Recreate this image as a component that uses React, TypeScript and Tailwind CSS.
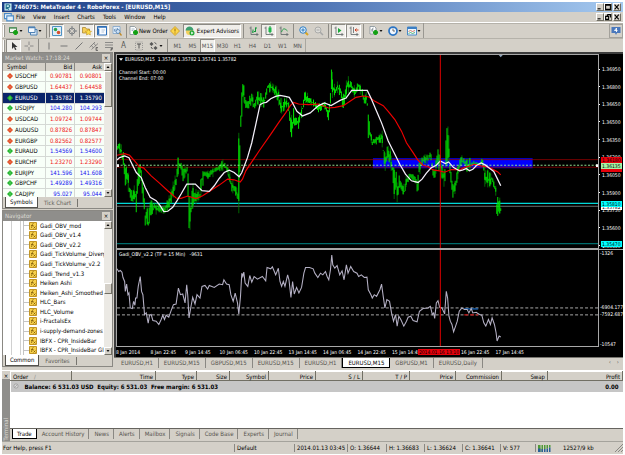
import type { ReactNode } from "react";
import clsx from "clsx";

type Point = [number, number];
type Range = [number, number, number];

const quotes = [
  { symbol: "USDCHF", bid: "0.90781", ask: "0.90801", up: false },
  { symbol: "GBPUSD", bid: "1.64437", ask: "1.64458", up: false },
  { symbol: "EURUSD", bid: "1.35782", ask: "1.35790", up: true, selected: true },
  { symbol: "USDJPY", bid: "104.280", ask: "104.293", up: true },
  { symbol: "USDCAD", bid: "1.09724", ask: "1.09744", up: false },
  { symbol: "AUDUSD", bid: "0.87826", ask: "0.87847", up: false },
  { symbol: "EURGBP", bid: "0.82562", ask: "0.82577", up: false },
  { symbol: "EURAUD", bid: "1.54569", ask: "1.54600", up: true },
  { symbol: "EURCHF", bid: "1.23270", ask: "1.23290", up: false },
  { symbol: "EURJPY", bid: "141.596", ask: "141.608", up: true },
  { symbol: "GBPCHF", bid: "1.49289", ask: "1.49316", up: true },
  { symbol: "CADJPY", bid: "95.027", ask: "95.044", up: true },
];

const indicators = [
  "Gadi_OBV_mod",
  "Gadi_OBV_v1.4",
  "Gadi_OBV_v2.2",
  "Gadi_TickVolume_Diverg",
  "Gadi_TickVolume_v2.2",
  "Gadi_Trend_v1.3",
  "Heiken Ashi",
  "Heiken_Ashi_Smoothed",
  "HLC_Bars",
  "HLC_Volume",
  "i-FractalsEx",
  "i-supply-demand-zones",
  "IBFX - CPR_InsideBar",
  "IBFX - CPR_InsideBar Gl",
];

const menus = ["File", "View", "Insert", "Charts", "Tools", "Window", "Help"];
const periods = ["M1", "M5", "M15", "M30", "H1", "H4", "D1", "W1", "MN"];

const chartTabs = [
  "EURUSD,H1",
  "EURUSD,M15",
  "GBPUSD,M15",
  "EURUSD,M15",
  "EURUSD,H1",
  "EURUSD,M15",
  "GBPUSD,M1",
  "EURUSD,Daily",
];

const priceTicks = [
  "1.36950", "1.36800", "1.36650", "1.36500", "1.36350", "1.36200",
  "1.36050", "1.35900", "1.35750", "1.35600", "1.35450",
];

const dates = [
  "8 Jan 2014", "8 Jan 22:45", "9 Jan 14:45", "10 Jan 06:45", "10 Jan 22:45",
  "13 Jan 14:45", "14 Jan 06:45", "14 Jan 22:45", "15 Jan 14:45", "",
  "16 Jan 22:45", "17 Jan 14:45", "", "",
];

const orderColumns = [
  { label: "Time", width: "w-[84px]" },
  { label: "Type", width: "w-[41px]" },
  { label: "Size", width: "w-[33px]" },
  { label: "Symbol", width: "w-[39px]" },
  { label: "Price", width: "w-[47px]" },
  { label: "S / L", width: "w-[47px]" },
  { label: "T / P", width: "w-[47px]" },
  { label: "Price", width: "w-[46px]" },
  { label: "Commission", width: "w-[46px]" },
  { label: "Swap", width: "w-[46px]" },
  { label: "Profit", width: "" },
];

const terminalTabs = [
  "Trade", "Account History", "News", "Alerts", "Mailbox",
  "Signals", "Code Base", "Experts", "Journal",
];

// x, high, low of the price bars, one block per part of the session
const barsA: Range[] = [
  [0, 275, 305], [13, 285, 320], [20, 300, 370], [25, 345, 420], [30, 350, 395], [38, 390, 460],
  [46, 435, 465], [54, 400, 450], [57, 420, 515], [60, 400, 450], [64, 350, 430], [70, 335, 390],
  [76, 390, 440], [81, 430, 500], [85, 490, 545], [90, 470, 515], [94, 490, 565], [101, 445, 510],
  [108, 460, 490], [123, 465, 500], [138, 475, 495], [153, 450, 490], [160, 430, 470], [168, 400, 450],
  [178, 370, 410], [185, 318, 375], [193, 340, 370], [200, 345, 410], [207, 345, 375], [211, 350, 380],
  [213, 278, 430], [216, 430, 580], [223, 455, 515], [228, 400, 480], [238, 420, 465], [250, 425, 450],
  [256, 355, 430], [263, 360, 385], [273, 365, 390], [288, 355, 385], [303, 350, 370], [321, 328, 365],
  [333, 350, 375], [340, 370, 400], [346, 390, 435], [353, 400, 430], [360, 415, 445], [365, 420, 460],
  [368, 165, 510], [372, 175, 330], [375, 110, 240], [379, 88, 150], [386, 130, 170], [392, 155, 195],
  [400, 135, 180], [408, 130, 170], [413, 155, 185], [424, 125, 165], [433, 125, 170], [443, 145, 175],
  [453, 95, 135], [463, 95, 125], [473, 105, 130], [485, 110, 160], [493, 145, 190], [503, 145, 195],
];
const barsB: Range[] = [
  [0, 140, 170], [8, 145, 180], [15, 180, 260], [20, 200, 265], [26, 170, 215], [30, 195, 245],
  [38, 200, 245], [45, 180, 220], [52, 160, 195], [58, 125, 160], [65, 125, 160], [75, 145, 165],
  [90, 150, 175], [97, 165, 195], [105, 155, 185], [115, 160, 180], [122, 155, 180], [130, 180, 220],
  [135, 140, 200], [139, 42, 140], [145, 90, 150], [150, 110, 135], [157, 95, 130], [165, 100, 150],
  [173, 130, 190], [180, 115, 170], [187, 75, 130], [195, 85, 130], [205, 110, 140], [213, 100, 150],
  [220, 95, 125], [230, 110, 140], [238, 140, 165], [246, 120, 160], [249, 150, 270], [255, 240, 270],
  [262, 265, 290], [275, 260, 285], [285, 255, 280], [291, 235, 280], [296, 280, 350], [301, 310, 365],
  [307, 290, 330], [315, 290, 345], [322, 340, 380], [328, 355, 450], [333, 350, 420], [337, 400, 460],
  [343, 370, 420], [350, 395, 430], [358, 410, 440], [365, 375, 410], [375, 370, 390], [385, 372, 395],
  [393, 385, 410], [398, 395, 450], [402, 330, 400], [410, 325, 350], [420, 315, 345], [430, 315, 345],
  [437, 298, 330], [443, 340, 375], [450, 370, 405], [457, 295, 350], [465, 300, 370], [472, 350, 390],
  [480, 360, 420], [485, 220, 370], [492, 235, 330], [497, 350, 390], [505, 400, 455],
];
const barsC: Range[] = [
  [0, 400, 440], [8, 360, 400], [14, 320, 370], [20, 315, 345], [30, 330, 355], [35, 330, 370],
  [45, 325, 365], [55, 335, 355], [65, 335, 350], [75, 340, 355], [85, 322, 350], [90, 350, 415],
  [96, 370, 400], [100, 360, 415], [106, 370, 415], [112, 375, 400], [120, 400, 420], [124, 410, 440],
  [127, 430, 520], [133, 450, 510], [137, 445, 490], [139, 470, 490],
];

const fastAverage: Point[] = [
  [0, 332], [8, 325], [23, 320], [36, 325], [48, 350], [58, 370], [73, 385], [85, 415], [100, 445],
  [118, 455], [130, 470], [141, 488], [153, 487], [168, 475], [181, 455], [193, 435], [210, 405],
  [236, 405], [256, 425], [278, 427], [293, 410], [308, 388], [323, 370], [338, 363], [353, 370],
  [368, 383], [376, 370], [393, 325], [406, 280], [418, 225], [431, 165], [440, 160], [450, 158],
  [463, 147], [478, 140], [491, 137], [507, 140], [519, 143], [529, 160], [542, 185], [559, 199],
  [582, 190], [607, 168], [625, 160], [645, 168], [672, 152], [690, 145], [707, 122], [754, 122],
  [765, 145], [782, 185], [797, 220], [817, 275], [837, 315], [852, 345], [869, 375], [887, 395],
  [907, 400], [919, 390], [932, 372], [947, 355], [962, 348], [974, 335], [989, 343], [999, 338],
  [1014, 355], [1032, 365], [1042, 362], [1052, 358], [1062, 365], [1072, 360], [1085, 347],
  [1097, 341], [1109, 347], [1122, 357], [1135, 367], [1145, 387], [1156, 410],
];
const slowAverage: Point[] = [
  [0, 318], [23, 313], [38, 318], [53, 335], [68, 353], [80, 356], [103, 380], [128, 402], [153, 425],
  [178, 447], [193, 448], [213, 441], [238, 449], [258, 440], [278, 427], [308, 408], [333, 390],
  [353, 392], [371, 399], [378, 390], [388, 365], [408, 335], [428, 305], [463, 255], [488, 218],
  [508, 190], [522, 168], [532, 158], [547, 163], [577, 165], [607, 163], [637, 175], [657, 173],
  [682, 168], [702, 155], [720, 143], [742, 139], [759, 142], [777, 155], [802, 168], [817, 185],
  [837, 210], [857, 245], [872, 280], [892, 310], [907, 333], [922, 348], [937, 352], [952, 362],
  [972, 365], [987, 369], [1007, 361], [1032, 362], [1047, 355], [1077, 345], [1097, 350],
  [1117, 353], [1135, 362], [1147, 368], [1156, 377],
];

const volumeLine: Point[] = [
  [0, 72], [5, 80], [10, 77], [15, 82], [18, 98], [23, 110], [25, 140], [29, 118], [33, 150], [36, 145],
  [40, 190], [46, 192], [50, 170], [54, 182], [56, 160], [60, 160], [64, 125], [70, 95], [74, 140],
  [78, 150], [83, 210], [88, 205], [94, 236], [98, 212], [103, 210], [108, 228], [118, 230], [126, 240],
  [133, 225], [138, 212], [143, 225], [148, 212], [156, 218], [163, 198], [170, 180], [178, 178],
  [185, 130], [191, 150], [198, 148], [205, 175], [210, 120], [213, 150], [217, 220], [223, 185],
  [228, 158], [235, 178], [241, 150], [250, 160], [256, 125], [265, 122], [273, 133], [278, 122],
  [293, 128], [308, 118], [318, 120], [322, 105], [330, 118], [338, 120], [343, 150], [350, 170],
  [356, 145], [363, 175], [367, 208], [372, 155], [376, 85], [379, 95], [382, 82], [386, 115],
  [394, 125], [400, 92], [406, 112], [413, 95], [423, 103], [438, 95], [448, 108], [452, 68], [463, 72],
  [468, 66], [478, 90], [486, 70], [491, 110], [496, 125], [501, 110], [506, 125], [514, 90], [518, 105],
  [524, 158], [529, 110], [534, 148], [541, 128], [548, 145], [556, 128], [563, 85], [568, 68],
  [580, 68], [591, 72], [596, 85], [605, 98], [613, 85], [620, 90], [628, 80], [633, 95], [638, 105],
  [643, 75], [647, 30], [650, 60], [656, 70], [663, 62], [671, 90], [678, 78], [684, 105], [691, 60],
  [696, 85], [704, 65], [713, 80], [723, 85], [728, 95], [736, 90], [745, 98], [753, 97], [757, 135],
  [765, 150], [769, 160], [775, 150], [782, 155], [792, 135], [797, 118], [802, 155], [807, 190],
  [813, 165], [821, 170], [827, 205], [833, 230], [839, 210], [844, 245], [849, 215], [855, 225],
  [864, 245], [872, 230], [877, 218], [885, 215], [892, 228], [904, 232], [911, 200], [922, 192],
  [937, 190], [944, 185], [950, 210], [954, 205], [957, 222], [962, 175], [967, 168], [972, 188],
  [979, 190], [987, 208], [992, 140], [996, 160], [1000, 215], [1004, 230], [1009, 240], [1014, 262],
  [1020, 245], [1025, 230], [1031, 200], [1039, 190], [1047, 195], [1055, 195], [1060, 205],
  [1067, 192], [1072, 205], [1082, 203], [1092, 210], [1099, 212], [1105, 235], [1111, 245],
  [1119, 225], [1125, 240], [1130, 220], [1137, 240], [1142, 265], [1145, 290], [1151, 275], [1156, 278],
];

const shift = (by: number, bars: Range[]): Range[] =>
  bars.map(([x, high, low]) => [x + by, high, low]);

const bars = [...barsA, ...shift(507, barsB), ...shift(1017, barsC)];

const noise = (n: number) => {
  const v = Math.sin(n * 12.9898) * 43758.5453;
  return v - Math.floor(v);
};

const buildBars = () => {
  let bright = "";
  let dark = "";
  let k = 0;
  for (let x = 1; x <= 1157; x += 3) {
    while (k < bars.length - 2 && bars[k + 1][0] <= x) k++;
    const [x0, h0, l0] = bars[k];
    const [x1, h1, l1] = bars[k + 1];
    const t = Math.min(1, Math.max(0, (x - x0) / (x1 - x0)));
    const high = h0 + (h1 - h0) * t;
    const low = l0 + (l1 - l0) * t;
    const range = low - high;
    const a = high + range * noise(x) * 0.5;
    const b = low - range * noise(x + 7) * 0.5;
    bright += `M${x} ${a.toFixed(0)}V${b.toFixed(0)}`;
    if (noise(x + 3) > 0.7) dark += `M${x} ${high.toFixed(0)}V${low.toFixed(0)}`;
  }
  return { bright, dark };
};

const priceBars = buildBars();
const line = (points: Point[]) => points.map((p) => p.join(",")).join(" ");

const Icon = ({ children, className }: { children: ReactNode; className?: string }) => (
  <svg viewBox="0 0 20 20" className={clsx("size-2.5 shrink-0", className)} fill="none" aria-hidden="true">
    {children}
  </svg>
);

const plus = <path d="M13 8v10M8 13h10" stroke="#12a012" strokeWidth="5" />;
const axes = <path d="M4 1v16h15M1 4h3M16 14v6" stroke="#5d6468" strokeWidth="1.6" />;

const icons = {
  newChart: (
    <Icon>
      <path d="M1 3h14v10H1z" fill="#eef6ee" stroke="#4a8050" strokeWidth="2" />
      <path d="M1 4h14" stroke="#5c9a66" strokeWidth="3" />
      {plus}
    </Icon>
  ),
  profiles: (
    <Icon>
      <path d="M5 7h13v11H5z" fill="#dbe9f7" stroke="#4f82b5" strokeWidth="2" />
      <path d="M1 2h13v11H1z" fill="#f4f9ff" stroke="#4f82b5" strokeWidth="2" />
      <path d="M1 3h13" stroke="#4f82b5" strokeWidth="3" />
    </Icon>
  ),
  watch: (
    <Icon>
      <path d="M1 1h18v18H1z" fill="#dceefa" stroke="#4f93c4" strokeWidth="2" />
      <circle cx="7" cy="7" r="3.5" fill="#2ca44a" />
      <circle cx="13" cy="13" r="3.5" fill="#d8502c" />
    </Icon>
  ),
  target: (
    <Icon>
      <circle cx="10" cy="10" r="6" stroke="#7b7f82" strokeWidth="2" />
      <path d="M10 0v8M10 12v8M0 10h8M12 10h8" stroke="#7b7f82" strokeWidth="2" />
    </Icon>
  ),
  favorites: (
    <Icon>
      <path d="M1 3h6l2 3h6v8H1z" fill="#f6cf5a" stroke="#a9832a" strokeWidth="1.5" />
      <path d="m13 6 2 4 4 .6-3 3 .8 4.4-3.8-2-4 2 .8-4.4-3-3 4.2-.6z" fill="#ffdf4a" stroke="#b8860b" />
    </Icon>
  ),
  data: (
    <Icon>
      <path d="M1 1h18v17H1z" fill="#f8fbff" stroke="#2e6fb8" strokeWidth="2" />
      <path d="M1 2h18M3 5v12" stroke="#2e6fb8" strokeWidth="3" />
      <path d="M9 8h7M9 12h5" stroke="#a0b8d0" strokeWidth="1.5" />
    </Icon>
  ),
  tester: (
    <Icon>
      <path d="M2 1h14v14H2z" fill="#e4effa" stroke="#7aa0c8" strokeWidth="1.5" />
      <path d="M5 11V6M8 12V5M11 9V4" stroke="#5a86b0" strokeWidth="1.5" />
      <circle cx="12" cy="11" r="4" fill="#cfe2f5" stroke="#4a78a8" strokeWidth="1.5" />
      <path d="m15 14 4 5" stroke="#c08a28" strokeWidth="2.5" />
    </Icon>
  ),
  newOrder: (
    <Icon>
      <path d="M2 1h9l4 4v12H2z" fill="#fff" stroke="#7b8a92" strokeWidth="1.5" />
      <path d="M5 6h6M5 9h4" stroke="#8aa0b0" strokeWidth="1.5" />
      {plus}
    </Icon>
  ),
  alert: (
    <Icon>
      <path d="m10 1 9 9-9 9-9-9z" fill="#fcd64c" stroke="#c79413" strokeWidth="1.5" />
      <path d="M10 5v6M10 13v2" stroke="#9a6a08" strokeWidth="2" />
    </Icon>
  ),
  expert: (
    <Icon>
      <circle cx="9" cy="11" r="7" fill="#f2cf5d" />
      <path d="M1 9c1-6 4-8 8-8s7 2 8 8z" fill="#3ea070" />
      <circle cx="14" cy="14" r="5" fill="#22a836" />
      <path d="m12.5 11 4.5 3-4.5 3z" fill="#fff" />
    </Icon>
  ),
  bar: (
    <Icon>
      {axes}
      <path d="M8 7v7M8 12H6M13 3v9M13 4h3M13 11h-3" stroke="#13983a" strokeWidth="2" />
    </Icon>
  ),
  candle: (
    <Icon>
      {axes}
      <path d="M12 0v15" stroke="#13983a" strokeWidth="2" />
      <path d="M9 3h6v9H9z" fill="#1cb84a" />
    </Icon>
  ),
  lineChart: (
    <Icon>
      {axes}
      <path d="M5 12c3-8 6-8 12-2" stroke="#13983a" strokeWidth="1.8" />
    </Icon>
  ),
  zoomIn: (
    <Icon>
      <path d="m12 12 6 6" stroke="#d9a520" strokeWidth="4" />
      <circle cx="8" cy="8" r="6.5" fill="#dff0fc" stroke="#2f7cc0" strokeWidth="2" />
      <path d="M8 4.5v7M4.500 8h7" stroke="#2f7cc0" strokeWidth="2" />
    </Icon>
  ),
  zoomOut: (
    <Icon>
      <path d="m12 12 6 6" stroke="#a5a6a5" strokeWidth="3" />
      <circle cx="8" cy="8" r="6" fill="#dddcd8" stroke="#a5a6a5" strokeWidth="1.8" />
      <path d="M5 8h6" stroke="#a5a6a5" strokeWidth="2" />
    </Icon>
  ),
  scroll: (
    <Icon>
      {axes}
      <path d="m8 4 7 5-7 5z" fill="#18a838" />
    </Icon>
  ),
  shiftEnd: (
    <Icon>
      {axes}
      <path d="M9 2v12" stroke="#5d6468" strokeWidth="1.6" />
      <path d="M19 8h-7M15 5l-3 3 3 3" stroke="#d04020" strokeWidth="2" />
    </Icon>
  ),
  addIndicator: (
    <Icon>
      <path d="M2 1h9l3 3v12H2z" fill="#fff" stroke="#7b8a92" strokeWidth="1.5" />
      <path d="M9 4c-3 0-2 3-3 9M4 8h5" stroke="#6a7a80" strokeWidth="1.5" />
      {plus}
    </Icon>
  ),
  clock: (
    <Icon>
      <circle cx="10" cy="10" r="8" fill="#f2f8ff" stroke="#2c75c4" strokeWidth="3.5" />
      <path d="M10 5v5h4" stroke="#444" strokeWidth="1.5" />
    </Icon>
  ),
  template: (
    <Icon>
      <path d="M1 2h18v16H1z" fill="#eef7ff" stroke="#4a8ac8" strokeWidth="2" />
      <path d="M1 4h18" stroke="#3c7fc4" strokeWidth="4" />
      <path d="m3 11 4-2 4 2 5-2" stroke="#cf5a3a" strokeWidth="1.5" />
      <path d="m3 15 4-2 4 2 5-2" stroke="#2ba04a" strokeWidth="1.5" />
    </Icon>
  ),
  cursor: (
    <Icon>
      <path d="M6 2v14l4-4 2 6 3-1-3-5h5z" fill="#333" />
    </Icon>
  ),
  cross: (
    <Icon>
      <path d="M10 1v7M10 12v7M1 10h7M12 10h7" stroke="#7a7a78" strokeWidth="1.6" />
    </Icon>
  ),
  vertical: <Icon><path d="M10 3v14" stroke="#777" strokeWidth="2" /></Icon>,
  horizontal: <Icon><path d="M3 10h14" stroke="#777" strokeWidth="2" /></Icon>,
  trend: <Icon><path d="M3 17 17 3" stroke="#777" strokeWidth="2" /></Icon>,
  channel: (
    <Icon>
      <path d="M1 13 12 2M5 17 18 5M4 8l5 6M9 4l5 6" stroke="#777" strokeWidth="1.6" />
      <path d="M18 13h-4v6h4M14 16h3" stroke="#555" strokeWidth="1.5" />
    </Icon>
  ),
  fibonacci: (
    <Icon>
      <path d="M2 3h16M2 8h16M2 13h16" stroke="#777" strokeWidth="1.6" />
      <path d="M18 15h-4v5M14 17h3" stroke="#555" strokeWidth="1.5" />
    </Icon>
  ),
  label: (
    <Icon>
      <path d="M3 2h14v16H3z" stroke="#888" strokeWidth="1.5" strokeDasharray="2 2" />
      <path d="M6 6h8M10 6v9" stroke="#555" strokeWidth="2" />
    </Icon>
  ),
  arrows: (
    <Icon>
      <path d="m1 6 4-4 4 4-4 4zM9 14l4-4 4 4-4 4z" fill="#555" />
      <path d="m4 12 3 4M11 3l4 3" stroke="#555" strokeWidth="2" />
    </Icon>
  ),
};

const Caret = () => (
  <svg viewBox="0 0 6 4" className="h-0.5 w-1 shrink-0" aria-hidden="true">
    <path d="M0 0h6L3 4z" fill="#111" />
  </svg>
);

const pressedLook = "border border-[#8c8a84] border-r-white border-b-white bg-[#f0eeea]";
const raisedLook = "border border-white border-r-[#716f64] border-b-[#716f64] bg-[#d4d0c8]";

type ToolProps = { name: string; children: ReactNode; pressed?: boolean; menu?: boolean };

const Tool = ({ name, children, pressed, menu }: ToolProps) => (
  <button
    type="button"
    aria-label={name}
    className={clsx(
      "flex h-3.5 shrink-0 items-center justify-center",
      menu ? "w-[19px]" : "w-[15px]",
      pressed && pressedLook,
    )}
  >
    {children}
    {menu && <Caret />}
  </button>
);

const Divider = () => (
  <span className="mx-0.5 h-3.5 w-px shrink-0 bg-[#8f8d87]" />
);

const Grip = () => (
  <span className="mx-px h-3 w-0.5 shrink-0 border-x border-l-white border-r-[#9a9892]" />
);

const WindowButtons = ({ restore }: { restore?: boolean }) => (
  <div className="ml-auto flex items-center">
    {["Minimize", restore ? "Restore" : "Maximize", "Close"].map((name) => (
      <button
        key={name}
        type="button"
        aria-label={name}
        className={clsx("flex h-2 w-2 items-center justify-center last:ml-px", raisedLook)}
      >
        <svg viewBox="0 0 10 10" className="size-1.5 shrink-0" fill="none" stroke="#000" strokeWidth="1.8">
          {name === "Minimize" && <path d="M1 8h5" />}
          {name === "Maximize" && <path d="M1 1h8v8H1zM1 2h8" />}
          {name === "Restore" && <path d="M4 1h5v5M1 4h5v5H1zM4 1v3" />}
          {name === "Close" && <path d="m1 1 7 8M8 1 1 9" />}
        </svg>
      </button>
    ))}
  </div>
);

const TitleBar = () => (
  <header className="flex h-[10px] items-center bg-linear-to-r from-[#1d3f86] via-[#4f74b4] to-[#a6caf0] px-0.5 text-white">
    <svg viewBox="0 0 18 18" className="mr-0.5 size-2" aria-hidden="true">
      <path d="M1 1h16v16H1z" fill="#bfe6ee" />
      <path d="M5 14V4h5a3 3 0 0 1 0 6H6l5 5" fill="none" stroke="#23708c" strokeWidth="2.5" />
    </svg>
    <h1 className="whitespace-nowrap font-bold">746075: MetaTrader 4 - RoboForex - [EURUSD,M15]</h1>
    <WindowButtons />
  </header>
);

const MenuBar = () => (
  <nav className="flex h-[10px] items-center px-0.5">
    <svg viewBox="0 0 18 18" className="mr-0.5 size-2.5" aria-hidden="true">
      <path d="M1 3h12v9H1z" fill="#fff" stroke="#4b8bc8" strokeWidth="2" />
      <path d="M5 7h12v9H5z" fill="#e4f1fc" stroke="#4b8bc8" strokeWidth="2" />
    </svg>
    {menus.map((item) => (
      <button key={item} type="button" className="mr-2">{item}</button>
    ))}
    <WindowButtons restore />
  </nav>
);

const MainToolbar = () => (
  <div className="flex h-4 items-center border-t border-white shadow-[inset_0_1px_0_#b5b2aa]">
    <div className="flex h-full items-center border-r border-[#9a9892]">
      <Grip />
      <Tool name="New chart" menu>{icons.newChart}</Tool>
      <Tool name="Profiles" menu>{icons.profiles}</Tool>
      <Divider />
      <Tool name="Market Watch" pressed>{icons.watch}</Tool>
      <Tool name="Data Window">{icons.target}</Tool>
      <Tool name="Navigator" pressed>{icons.favorites}</Tool>
      <Tool name="Terminal" pressed>{icons.data}</Tool>
      <Tool name="Strategy Tester">{icons.tester}</Tool>
      <Divider />
      <button type="button" className="flex h-3.5 items-center whitespace-nowrap">
        {icons.newOrder}
        New Order
      </button>
      <Tool name="MetaEditor">{icons.alert}</Tool>
      <button
        type="button"
        className={clsx("flex h-3.5 items-center gap-0.5 whitespace-nowrap px-px", pressedLook)}
      >
        {icons.expert}
        Expert Advisors
      </button>
      <Divider />
      <Tool name="Bar chart">{icons.bar}</Tool>
      <Tool name="Candlesticks" pressed>{icons.candle}</Tool>
      <Tool name="Line chart">{icons.lineChart}</Tool>
      <Divider />
      <Tool name="Zoom in">{icons.zoomIn}</Tool>
      <Tool name="Zoom out">{icons.zoomOut}</Tool>
      <Divider />
      <Tool name="Auto scroll" pressed>{icons.scroll}</Tool>
      <Tool name="Chart shift" pressed>{icons.shiftEnd}</Tool>
      <Divider />
      <Tool name="Indicators" menu>{icons.addIndicator}</Tool>
      <Tool name="Periods" menu>{icons.clock}</Tool>
      <Tool name="Templates" menu>{icons.template}</Tool>
    </div>
    <button
      type="button"
      aria-label="Messages"
      className="ml-auto flex h-3.5 w-3.5 items-center justify-center border border-[#a3a19b]"
    >
      <svg viewBox="0 0 20 20" className="size-2.5" aria-hidden="true">
        <path d="M1 2h18v12h-7l-2 4-2-4H1z" fill="#4a78bc" />
        <path d="M11 4v8M7 9l4-5M7 9h6" stroke="#fff" strokeWidth="1.8" fill="none" />
      </svg>
    </button>
  </div>
);

const DrawingToolbar = () => (
  <div className="flex h-3.5 items-center border-t border-[#b5b2aa] text-[#555]">
    <div className="flex h-full items-center border-r border-[#a9a7a0]">
      <Grip />
      <Tool name="Cursor" pressed>{icons.cursor}</Tool>
      <Tool name="Crosshair">{icons.cross}</Tool>
      <Divider />
      <Tool name="Vertical line">{icons.vertical}</Tool>
      <Tool name="Horizontal line">{icons.horizontal}</Tool>
      <Tool name="Trendline">{icons.trend}</Tool>
      <Tool name="Channel">{icons.channel}</Tool>
      <Tool name="Fibonacci">{icons.fibonacci}</Tool>
      <Tool name="Text"><span className="text-[8px]">A</span></Tool>
      <Tool name="Text label">{icons.label}</Tool>
      <Tool name="Arrows" menu>{icons.arrows}</Tool>
      <Divider />
      {periods.map((period) => (
        <Tool key={period} name={period} pressed={period === "M15"}>{period}</Tool>
      ))}
    </div>
  </div>
);

const PanelTitle = ({ children }: { children: ReactNode }) => (
  <div className="flex h-[10px] shrink-0 items-center justify-between bg-[#8f8e8b] px-0.5 text-[#dedcd6]">
    <h2>{children}</h2>
    <button
      type="button"
      aria-label="Close panel"
      className="flex size-2 items-center justify-center bg-[#d4d0c8] text-black"
    >
      ×
    </button>
  </div>
);

const ScrollBar = ({ middle }: { middle?: boolean }) => (
  <div className="flex w-2 shrink-0 flex-col bg-[#ebe9e4]">
    <button type="button" aria-label="Scroll up" className={clsx("flex h-2 items-center justify-center", raisedLook)}>
      <svg viewBox="0 0 6 4" className="h-0.5 w-1"><path d="M0 4h6L3 0z" /></svg>
    </button>
    {middle && <span className="flex-1" />}
    <span className={clsx(raisedLook, middle ? "h-[11px]" : "h-9")} />
    <span className="flex-1" />
    <button type="button" aria-label="Scroll down" className={clsx("flex h-2 items-center justify-center", raisedLook)}>
      <Caret />
    </button>
  </div>
);

const PanelTabs = ({ active, other }: { active: string; other: string }) => (
  <div className="flex h-[11px] shrink-0 items-center pl-0.5 text-[#5f5d58]">
    <button type="button" className="h-full border-x border-b border-[#55534e] bg-white px-1 text-black">
      {active}
    </button>
    <button type="button" className="border-r border-[#77756f] px-1.5">{other}</button>
  </div>
);

const MarketWatch = () => (
  <section className="flex min-h-0 flex-1 flex-col border border-[#8a8883]">
    <PanelTitle>Market Watch: 17:18:24</PanelTitle>
    <div className="flex min-h-0 flex-1">
      <div className="min-w-0 flex-1 overflow-hidden bg-[#f8fff8]">
        <table className="h-[137px] w-full table-fixed border-collapse">
          <thead>
            <tr className="h-2 bg-[#d4d0c8]">
              <th className="w-[42%] border-r border-[#8a8883] p-0 pl-1 text-left font-normal">Symbol</th>
              <th className="border-r border-[#8a8883] p-0 pr-0.5 text-right font-normal">Bid</th>
              <th className="p-0 pr-0.5 text-right font-normal">Ask</th>
            </tr>
          </thead>
          <tbody>
            {quotes.map((q) => (
              <tr
                key={q.symbol}
                className={clsx(
                  "h-[10px] border-b border-[#d5d9d5]",
                  q.selected ? "bg-[#0a246a] text-white" : q.up ? "text-[#1414f0]" : "text-[#f01414]",
                )}
              >
                <td className={clsx("border-r border-[#d5d9d5] p-0", !q.selected && "text-black")}>
                  <span className="flex items-center gap-0.5 pl-1">
                    <svg viewBox="0 0 12 12" className="size-1.5 shrink-0" aria-hidden="true">
                      <path d="m6 0 6 6-6 6-6-6z" fill={q.up ? "#22b52e" : "#e04820"} />
                      <path d={q.up ? "M6 3v6" : "M3 6h6"} stroke={q.up ? "#a5eda5" : "#ffc0a8"} />
                    </svg>
                    {q.symbol}
                  </span>
                </td>
                <td className="border-r border-[#d5d9d5] p-0 pr-0.5 text-right">{q.bid}</td>
                <td className="p-0 pr-0.5 text-right">{q.ask}</td>
              </tr>
            ))}
          </tbody>
        </table>
      </div>
      <ScrollBar />
    </div>
    <PanelTabs active="Symbols" other="Tick Chart" />
  </section>
);

const Navigator = () => (
  <section className="flex min-h-0 flex-1 flex-col border border-[#8a8883]">
    <PanelTitle>Navigator</PanelTitle>
    <div className="flex min-h-0 flex-1 bg-white">
      <div className="ml-2 w-2.5 shrink-0 border-x border-[#d0d0d0]" />
      <ul className="ml-0.5 grid min-w-0 flex-1 auto-rows-fr overflow-hidden border-l border-[#c4c4c4]">
        {indicators.map((name) => (
          <li key={name} className="flex min-h-0 items-center gap-[3px] whitespace-nowrap">
            <span className="h-px w-1.5 shrink-0 bg-[#c4c4c4]" />
            <svg viewBox="0 0 16 16" className="-ml-1 size-2 shrink-0" fill="none" aria-hidden="true">
              <path d="M1 1h14v14H1z" fill="#f7d04a" stroke="#c19526" strokeWidth="2" />
              <path d="M9 3C6 3 7 6 5 12M4 7h5M9 9l4 4M13 9l-4 4" stroke="#7d5a08" strokeWidth="1.5" />
            </svg>
            {name}
          </li>
        ))}
      </ul>
      <ScrollBar middle />
    </div>
    <PanelTabs active="Common" other="Favorites" />
  </section>
);

const priceTags = [
  { price: "", top: "top-[112px]", look: "bg-red-600" },
  { price: "1.36180", top: "top-[103px]", look: "bg-red-600 text-black" },
  { price: "1.36135", top: "top-[109px]", look: "bg-[#a4f4a4] text-black" },
  { price: "1.35782", top: "top-[150px]", look: "bg-white text-black" },
  { price: "1.35810", top: "top-[147px]", look: "bg-[#00ffff] text-black" },
  { price: "1.35470", top: "top-[187px]", look: "bg-[#00ffff] text-black" },
];

const PriceChart = () => (
  <div className="flex min-h-0 flex-[2]">
    <div className="relative min-w-0 flex-1 border border-[#a8a8a8]">
      <svg viewBox="0 15 1449 582" preserveAspectRatio="none" className="absolute inset-0 size-full" fill="none">
        <path d="M771 327h481v30H771z" fill="#0000ff" />
        <path d="M0 331h1449M0 354h1449" stroke="#8a0000" strokeWidth="2.5" />
        <path d="M0 472h1449" stroke="#66716f" strokeWidth="3" />
        <path d="M0 463h1449" stroke="#00d8d8" strokeWidth="3.5" />
        <path d="M0 585h1449" stroke="#006c6c" strokeWidth="4" />
        <path d={priceBars.dark} stroke="#007a00" strokeWidth="2.5" />
        <path d={priceBars.bright} stroke="#00f000" strokeWidth="2.8" />
        <path d="M0 348h1449" stroke="#90e090" strokeWidth="3" strokeDasharray="6 5" />
        <polyline points={line(slowAverage)} stroke="#f00000" strokeWidth="3.5" />
        <polyline points={line(fastAverage)} stroke="#f4f0fa" strokeWidth="3.8" />
        <path d="M974 12v588" stroke="#e00000" strokeWidth="3" />
        <path d="M1150 15h12l-6 7z" fill="#8fa4bc" />
        <path d="M0 345h6v8H0zM1443 345h6v8h-6z" fill="#fff" />
      </svg>
      <div className="relative px-0.5 pt-px">
        <p className="flex items-center gap-0.5">
          <svg viewBox="0 0 6 4" className="h-[3px] w-1"><path d="M0 0h6L3 4z" fill="#fff" /></svg>
          EURUSD,M15&nbsp; 1.35746 1.35782 1.35741 1.35782
        </p>
        <p className="pt-[7px]">Channel Start: 00:00</p>
        <p>Channel End: 07:00</p>
      </div>
    </div>
    <div className="relative flex w-6 shrink-0 flex-col justify-between pt-3">
      {priceTicks.map((tick) => (
        <span key={tick} className="flex items-center gap-0.5">
          <span className="h-px w-px bg-white" />
          {tick}
        </span>
      ))}
      {priceTags.map((tag) => (
        <span key={tag.top} className={clsx("absolute left-0.5 h-1.5 w-[21px] pl-px", tag.top, tag.look)}>
          {tag.price}
        </span>
      ))}
    </div>
  </div>
);

const VolumeChart = () => (
  <div className="flex min-h-0 flex-1">
    <div className="relative min-w-0 flex-1 border-x border-b border-[#a8a8a8]">
      <svg viewBox="0 15 1449 291" preserveAspectRatio="none" className="absolute inset-0 size-full" fill="none">
        <path d="M0 190h1449M0 211h1449" stroke="#a8a8a8" strokeWidth="3" strokeDasharray="9 6" />
        <path d="M1046 193h42" stroke="#1c66b8" strokeWidth="4" />
        <path d="M1046 211h42" stroke="#c01010" strokeWidth="4" strokeDasharray="12 6" />
        <polyline points={line(volumeLine)} stroke="#b4b0c4" strokeWidth="3.2" />
        <path d="M974 12v300" stroke="#e00000" strokeWidth="3" />
      </svg>
      <p className="relative px-0.5 pt-px">Gadi_OBV_v2.2 (TF = 15 Min)&nbsp;&nbsp; -9631</p>
    </div>
    <div className="flex w-6 shrink-0 flex-col whitespace-nowrap pl-px">
      <span>-1326</span>
      <span className="mt-12">-6904.177</span>
      <span className="mt-px">-7592.687</span>
      <span className="mt-auto">-10547</span>
    </div>
  </div>
);

const Chart = () => (
  <div className="flex min-h-0 flex-1 flex-col border-t-2 border-l-2 border-[#3c3c3c] bg-black text-[5px] leading-[6px] text-white">
    <PriceChart />
    <span className="h-px shrink-0 bg-[#a8a8a8]" />
    <VolumeChart />
    <div className="relative mr-6 grid h-[10px] shrink-0 grid-cols-14 whitespace-nowrap">
      {dates.map((date, i) => (
        <span key={i} className="w-0 pt-0.5">{date}</span>
      ))}
      <span className="absolute left-[62.5%] top-0.5 bg-red-600 px-px text-black">2014.01.16 13:10</span>
    </div>
  </div>
);

const ChartTabs = () => (
  <div className="flex h-[13px] shrink-0 items-start whitespace-nowrap border-t border-[#77756f] pl-0.5 text-[#55534e]">
    {chartTabs.map((tab, i) => (
      <button
        key={i}
        type="button"
        className={clsx(
          "h-[10px] px-[5px]",
          i === 5 ? "border border-t-0 border-black bg-white text-black" : "border-r border-[#8a8883]",
        )}
      >
        {tab}
      </button>
    ))}
    <span className="ml-auto flex gap-1.5 pr-1">
      <button type="button" aria-label="Previous tab">‹</button>
      <button type="button" aria-label="Next tab">›</button>
    </span>
  </div>
);

const Terminal = () => (
  <section className="flex h-[71px] shrink-0 border-t border-white">
    <div className="flex w-2 shrink-0 flex-col items-center justify-between bg-[#8f8e8b] text-[#dedcd6]">
      <button type="button" aria-label="Close terminal" className="h-2 w-full bg-[#d4d0c8] leading-[7px] text-black">
        ×
      </button>
      <h2 className="rotate-180 [writing-mode:vertical-rl]">Terminal</h2>
    </div>
    <div className="flex min-w-0 flex-1 flex-col">
      <div className="flex-1 border-b border-[#66645f] bg-white">
        <table className="w-full table-fixed border-collapse leading-[7px]">
          <thead>
            <tr className="h-[9px]">
              <th className={clsx("w-[61px] p-0 pl-0.5 text-left font-normal", raisedLook)}>
                Order <span className="pl-1 text-[#8a8883]">∕</span>
              </th>
              {orderColumns.map((column, i) => (
                <th key={i} className={clsx("p-0 pr-0.5 text-right font-normal", column.width, raisedLook)}>
                  {column.label}
                </th>
              ))}
            </tr>
          </thead>
          <tbody>
            <tr className="h-[11px] bg-[#c6c6c6] font-bold">
              <td colSpan={11} className="p-0 pl-0.5">
                <span className="flex items-center gap-1.5 whitespace-pre">
                  <svg viewBox="0 0 10 10" className="size-1.5" fill="#ddd" stroke="#8a8a8a" aria-hidden="true">
                    <circle cx="5" cy="5" r="3.5" />
                    <path d="m3 7 4-4" />
                  </svg>
                  {"Balance: 6 531.03 USD  Equity: 6 531.03  Free margin: 6 531.03"}
                </span>
              </td>
              <td className="p-0 pr-1 text-right">0.00</td>
            </tr>
          </tbody>
        </table>
      </div>
      <div className="flex h-3 shrink-0 items-start gap-px whitespace-nowrap pl-0.5 text-[#55534e]">
        {terminalTabs.map((tab, i) => (
          <button
            key={tab}
            type="button"
            className={clsx(
              "h-[10px] px-1",
              i === 0 ? "border border-t-0 border-black bg-white text-black" : "border-r border-[#8a8883]",
            )}
          >
            {tab}
          </button>
        ))}
      </div>
    </div>
  </section>
);

const statusCells = [
  { text: "Default", width: "w-[60px]" },
  { text: "2014.01.13 03:45", width: "w-[53px]" },
  { text: "O: 1.36644", width: "w-[39px]" },
  { text: "H: 1.36683", width: "w-[38px]" },
  { text: "L: 1.36624", width: "w-[38px]" },
  { text: "C: 1.36641", width: "w-[38px]" },
  { text: "V: 577", width: "w-[35px]" },
];

const StatusBar = () => (
  <footer className="flex h-[13px] shrink-0 items-center whitespace-nowrap border-t border-[#a5a39c] pl-px">
    <p className="flex-1">For Help, press F1</p>
    {statusCells.map((cell) => (
      <span key={cell.text} className={clsx("shrink-0 border-l border-[#8a8883] pl-0.5", cell.width)}>
        {cell.text}
      </span>
    ))}
    <span className="flex w-[88px] shrink-0 items-center gap-3 border-l border-[#8a8883] pl-0.5">
      <svg viewBox="0 0 26 14" className="h-[7px] w-[13px]" aria-hidden="true">
        <path d="M0 0h5v14H0zM7 0h3v14H7zM12 0h3v8h-3zM17 0h3v7h-3zM22 0h3v5h-3z" fill="#4f9a36" />
        <path d="M0 7h5v7H0zM7 8h3v6H7zM12 8h3v6h-3zM17 7h3v7h-3zM22 5h3v9h-3z" fill="#285f96" />
      </svg>
      12527/9 kb
      <svg viewBox="0 0 8 8" className="ml-auto size-2" stroke="#8a8883" aria-hidden="true">
        <path d="M0 8 8 0M3 8l5-5M6 8l2-2" />
      </svg>
    </span>
  </footer>
);

const App = () => (
  <div className="h-screen bg-white p-0.5 pb-px font-['DejaVu_Sans_Condensed','DejaVu_Sans',sans-serif] text-[6px] leading-[8px] text-black">
    <div className="flex h-full flex-col bg-[#d4d0c8]">
      <TitleBar />
      <MenuBar />
      <MainToolbar />
      <DrawingToolbar />
      <main className="flex min-h-0 flex-1 gap-px">
        <aside className="flex w-[111px] shrink-0 flex-col gap-px pb-[3px]">
          <MarketWatch />
          <Navigator />
        </aside>
        <div className="flex min-w-0 flex-1 flex-col">
          <Chart />
          <ChartTabs />
        </div>
      </main>
      <Terminal />
      <StatusBar />
    </div>
  </div>
);

export default App;
